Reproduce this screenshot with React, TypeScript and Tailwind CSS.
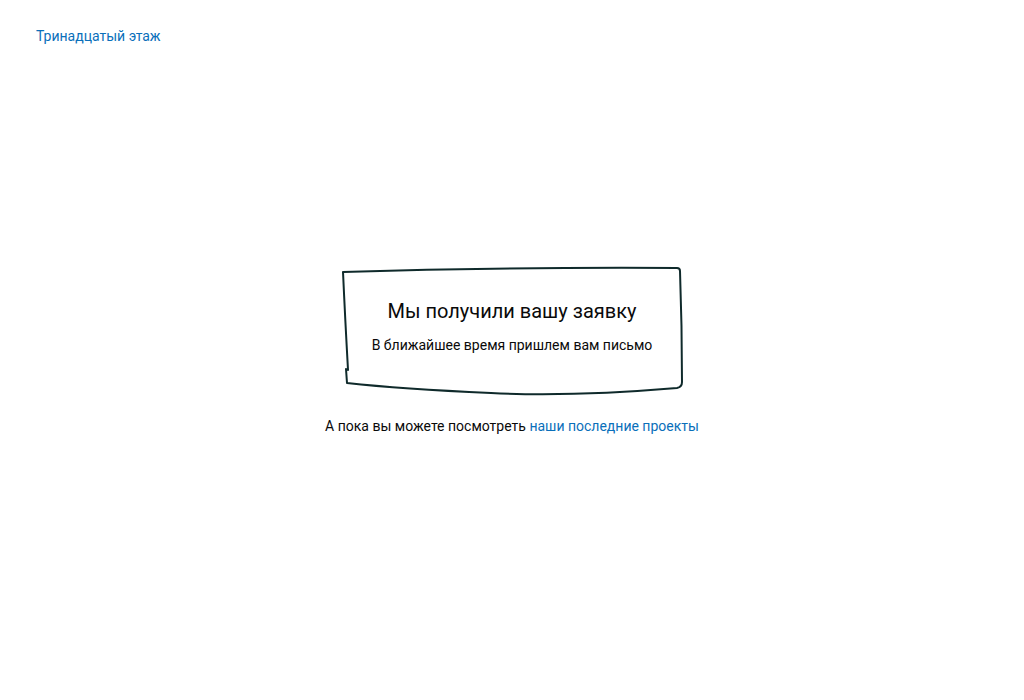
const Frame = () => (
  <svg
    className="absolute inset-0 h-full w-full pointer-events-none"
    viewBox="0 0 342 130"
    preserveAspectRatio="none"
    fill="none"
  >
    <path
      d="M2 6 Q 170 1 336 2 Q 339 2 339 5 Q 341 60 341 116 Q 341 121 336 122 Q 230 131 150 127 Q 60 123 6 117 L 5 103 M 7 104 Q 4 50 2 6"
      stroke="#0f2a2b"
      strokeWidth="2"
      strokeLinecap="round"
      strokeLinejoin="round"
    />
  </svg>
)

export default function App() {
  return (
    <div className="relative flex h-[700px] w-full flex-col bg-white font-['Roboto',sans-serif] text-[#0a0a0a]">
      <header className="px-9 pt-[24px]">
        <a href="#" className="text-[14px] leading-5 text-[#0a6fba]">
          Тринадцатый этаж
        </a>
      </header>
      <main className="flex flex-1 flex-col items-center justify-center pb-[46px]">
        <div className="relative flex h-[130px] w-[342px] flex-col items-center pt-[31px]">
          <Frame />
          <h1 className="text-[20px] leading-[28px]">Мы получили вашу заявку</h1>
          <p className="mt-[10px] text-[14px] leading-5">В ближайшее время пришлем вам письмо</p>
        </div>
        <p className="mt-[20px] text-[14px] leading-5">
          А пока вы можете посмотреть{' '}
          <a href="#" className="text-[#0a6fba]">
            наши последние проекты
          </a>
        </p>
      </main>
    </div>
  )
}
